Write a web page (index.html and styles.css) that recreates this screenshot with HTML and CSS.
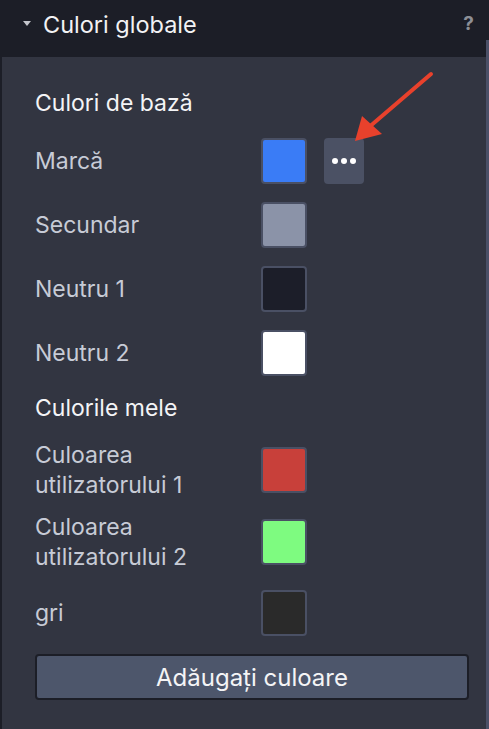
FILE: index.html
```html
<!DOCTYPE html>
<html lang="ro">
<head>
  <meta charset="UTF-8" />
  <title>Culori globale</title>
  <link rel="stylesheet" href="styles.css">
</head>
<body>
  <div class="panel">
    <div class="panel-head">
      <span class="caret"></span>
      <span class="panel-title">Culori globale</span>
      <span class="help">?</span>
    </div>

    <div class="panel-body">
      <div class="group-title">Culori de bază</div>
      <div class="row">
        <span class="label">Marcă</span>
        <span class="swatch brand"></span>
        <button class="more"><i></i><i></i><i></i></button>
      </div>
      <div class="row">
        <span class="label">Secundar</span>
        <span class="swatch secondary"></span>
      </div>
      <div class="row">
        <span class="label">Neutru 1</span>
        <span class="swatch neutral1"></span>
      </div>
      <div class="row">
        <span class="label">Neutru 2</span>
        <span class="swatch neutral2"></span>
      </div>

      <div class="group-title">Culorile mele</div>
      <div class="row">
        <span class="label two">Culoarea<br>utilizatorului 1</span>
        <span class="swatch user1"></span>
      </div>
      <div class="row">
        <span class="label two">Culoarea<br>utilizatorului 2</span>
        <span class="swatch user2"></span>
      </div>
      <div class="row last">
        <span class="label">gri</span>
        <span class="swatch gray"></span>
      </div>

      <button class="add-btn">Adăugați culoare</button>
    </div>

    <div class="scroll-thumb"></div>

    <svg class="pointer" width="489" height="200" viewBox="0 0 489 200">
      <line x1="431" y1="74" x2="368" y2="128" stroke="#e8412c" stroke-width="4" stroke-linecap="round"/>
      <polygon points="355,141 362,116 382,134" fill="#e8412c"/>
    </svg>
  </div>
</body>
</html>
```

FILE: styles.css
```css
* {
  margin: 0;
  padding: 0;
  box-sizing: border-box;
}
html, body {
  width: 100%;
  height: 100%;
  overflow: hidden;
  background: #1c1e27;
  font-family: 'Inter', 'Noto Sans', sans-serif;
}
.panel {
  position: relative;
  height: 100%;
  display: flex;
  flex-direction: column;
}
.panel-head {
  height: 57px;
  display: flex;
  align-items: center;
  padding: 0 15px 4px 23px;
  background: #1c1e27;
}
.caret {
  width: 0;
  height: 0;
  border-left: 4px solid transparent;
  border-right: 4px solid transparent;
  border-top: 5px solid #c4c6cc;
  margin-right: 12px;
  margin-top: -6px;
}
.panel-title {
  flex-grow: 1;
  font-size: 23.5px;
  color: #f2f2f4;
  margin-top: -4px;
}
.help {
  font-size: 19px;
  font-weight: 700;
  color: #8d8f96;
  margin-top: -6px;
}
.panel-body {
  flex-grow: 1;
  margin-left: 2px;
  margin-right: 3px;
  background: #323541;
  padding: 32px 17px 0 33px;
  display: flex;
  flex-direction: column;
  gap: 18px;
}
.group-title {
  font-size: 23px;
  line-height: 28px;
  color: #f4f4f6;
  margin-bottom: 3px;
}
.row {
  display: flex;
  align-items: center;
  min-height: 46px;
}
.row.last {
  margin-top: 3px;
}
.label {
  width: 226px;
  font-size: 23px;
  line-height: 28px;
  color: #c7cbd6;
}
.label.two {
  line-height: 30px;
  margin: -3px 0;
}
.swatch {
  width: 46px;
  height: 46px;
  border: 2px solid #4a5064;
  border-radius: 4px;
}
.brand { background: #3a7cf6; }
.secondary { background: #8b93a8; }
.neutral1 { background: #1c1e29; }
.neutral2 { background: #ffffff; }
.user1 { background: #c8403a; }
.user2 { background: #7efb80; }
.gray { background: #2a2a2a; }
.more {
  width: 40px;
  height: 46px;
  margin-left: 17px;
  border: none;
  border-radius: 4px;
  background: #4b5164;
  display: flex;
  align-items: center;
  justify-content: center;
  gap: 3px;
}
.more i {
  width: 6px;
  height: 6px;
  border-radius: 50%;
  background: #fff;
}
.add-btn {
  height: 46px;
  border: 2px solid #1c1e27;
  border-radius: 4px;
  background: #4d566b;
  color: #f4f4f6;
  font-family: 'Inter', 'Noto Sans', sans-serif;
  font-size: 24px;
}
.scroll-thumb {
  position: absolute;
  top: 40px;
  right: 0;
  bottom: 0;
  width: 3px;
  background: #4b5067;
}
.pointer {
  position: absolute;
  top: 0;
  left: 0;
  pointer-events: none;
}
```
